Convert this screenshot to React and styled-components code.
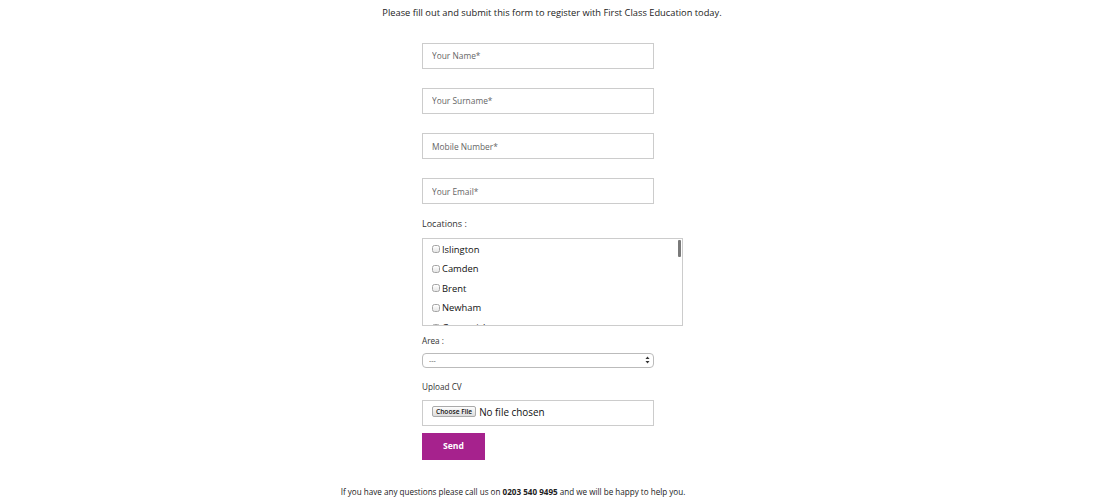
import React from "react";
import styled, { createGlobalStyle } from "styled-components";

const locations = [
  "Islington",
  "Camden",
  "Brent",
  "Newham",
  "Greenwich",
  "Hackney",
  "Haringey",
  "Lambeth",
  "Lewisham",
  "Southwark",
  "Tower Hamlets",
  "Wandsworth",
  "Westminster",
  "Barnet",
  "Ealing",
  "Enfield",
  "Hounslow",
  "Croydon",
  "Bromley",
  "Harrow",
  "Hillingdon",
  "Redbridge",
];

const App = () => {
  return (
    <>
      <GlobalStyle />
      <Page>
        <Intro>
          Please fill out and submit this form to register with First Class
          Education today.
        </Intro>
        <Form onSubmit={(e) => e.preventDefault()}>
          <Fields>
            <TextInput placeholder="Your Name*" />
            <TextInput placeholder="Your Surname*" />
            <TextInput placeholder="Mobile Number*" />
            <TextInput placeholder="Your Email*" />
          </Fields>

          <Label>Locations :</Label>
          <ListFrame>
            <CheckList>
              {locations.map((name) => (
                <CheckItem key={name}>
                  <Check type="checkbox" />
                  {name}
                </CheckItem>
              ))}
            </CheckList>
            <ScrollThumb />
          </ListFrame>

          <SmallLabel $gap={9}>Area :</SmallLabel>
          <SelectWrap>
            <Select defaultValue="">
              <option value="">---</option>
            </Select>
            <Arrows width="5" height="8" viewBox="0 0 5 8">
              <path d="M2.5 0.5 L4.5 3 L0.5 3 Z" fill="#333" />
              <path d="M2.5 7.5 L4.5 5 L0.5 5 Z" fill="#333" />
            </Arrows>
          </SelectWrap>

          <SmallLabel $gap={13.5}>Upload CV</SmallLabel>
          <FileBox>
            <ChooseButton type="button">Choose File</ChooseButton>
            <FileName>No file chosen</FileName>
          </FileBox>

          <SendButton type="submit">Send</SendButton>
        </Form>
        <Footer>
          If you have any questions please call us on <b>0203 540 9495</b> and
          we will be happy to help you.
        </Footer>
      </Page>
    </>
  );
};

export default App;

const GlobalStyle = createGlobalStyle`
  body {
    margin: 0;
    background: #fff;
    font-family: "Open Sans", "Liberation Sans", sans-serif;
    color: #333;
  }
`;

const Page = styled.div`
  width: 1110px;
  height: 500px;
  overflow: hidden;
`;

const Intro = styled.p`
  margin: 0;
  padding: 7px 6px 0 0;
  text-align: center;
  font-size: 9.3px;
  line-height: 12px;
  color: #222;
`;

const Form = styled.form`
  margin: 23.5px 0 0 422px;
  width: 261px;
  display: flex;
  flex-direction: column;
  align-items: flex-start;
`;

const Fields = styled.div`
  display: flex;
  flex-direction: column;
  gap: 19.3px;
`;

const TextInput = styled.input`
  box-sizing: border-box;
  width: 232px;
  height: 26px;
  padding: 0 9px;
  border: 1px solid #ccc;
  outline: none;
  font-family: "Open Sans", sans-serif;
  font-size: 8.4px;
  color: #333;

  &::placeholder {
    color: #666;
  }
`;

const Label = styled.div`
  margin-top: 14px;
  font-size: 9px;
  line-height: 12px;
  color: #333;
`;

const SmallLabel = styled.div`
  margin-top: ${(p) => p.$gap}px;
  font-size: 8.2px;
  line-height: 11px;
  color: #333;
`;

const ListFrame = styled.div`
  position: relative;
  box-sizing: border-box;
  margin-top: 8px;
  width: 261px;
  height: 88px;
  border: 1px solid #ccc;
`;

const CheckList = styled.div`
  height: 100%;
  padding: 0 0 0 8px;
  box-sizing: border-box;
  overflow-y: auto;
  scrollbar-width: none;

  &::-webkit-scrollbar {
    display: none;
  }
`;

const ScrollThumb = styled.div`
  position: absolute;
  top: 1px;
  right: 1px;
  width: 3px;
  height: 17px;
  background: #7a7a7a;
  border-radius: 1px;
`;

const CheckItem = styled.label`
  display: flex;
  align-items: center;
  height: 19.6px;
  font-size: 9.4px;
  color: #111;
`;

const Check = styled.input`
  appearance: none;
  box-sizing: border-box;
  width: 8px;
  height: 8px;
  margin: 0 2px 0 1px;
  border: 1px solid #a5a5a5;
  border-radius: 2.5px;
  background: linear-gradient(#fff, #e6e6e6);
`;

const SelectWrap = styled.div`
  position: relative;
  display: flex;
  margin-top: 6.5px;
  width: 232px;
  height: 15px;
`;

const Select = styled.select`
  display: block;
  appearance: none;
  box-sizing: border-box;
  width: 100%;
  height: 15px;
  margin: 0;
  padding: 0 6px;
  border: 1px solid #bbb;
  border-radius: 4px;
  background: #fff;
  font-family: "Open Sans", sans-serif;
  font-size: 7px;
  line-height: 13px;
  color: #555;
  outline: none;
`;

const Arrows = styled.svg`
  position: absolute;
  right: 4px;
  top: 3.5px;
  pointer-events: none;
`;

const FileBox = styled.div`
  box-sizing: border-box;
  margin-top: 7.5px;
  width: 232px;
  height: 26px;
  border: 1px solid #ccc;
  display: flex;
  align-items: center;
  padding: 0 0 2px 9px;
  gap: 3px;
`;

const ChooseButton = styled.button`
  box-sizing: border-box;
  height: 11px;
  padding: 0 3px;
  border: 1px solid #aaa;
  border-radius: 2px;
  background: linear-gradient(#fdfdfd, #dcdcdc);
  font-family: "Open Sans", sans-serif;
  font-weight: 600;
  font-size: 6.6px;
  line-height: 9px;
  color: #111;
`;

const FileName = styled.span`
  font-size: 9.9px;
  color: #111;
`;

const SendButton = styled.button`
  margin-top: 7px;
  width: 63px;
  height: 27px;
  border: none;
  background: #a6228d;
  color: #fff;
  font-family: "Open Sans", sans-serif;
  font-weight: 700;
  font-size: 8.6px;
  padding: 0;
`;

const Footer = styled.p`
  margin: 26px 0 0;
  padding-right: 84px;
  text-align: center;
  font-size: 8.1px;
  line-height: 12px;
  color: #222;

  b {
    font-weight: 700;
  }
`;
